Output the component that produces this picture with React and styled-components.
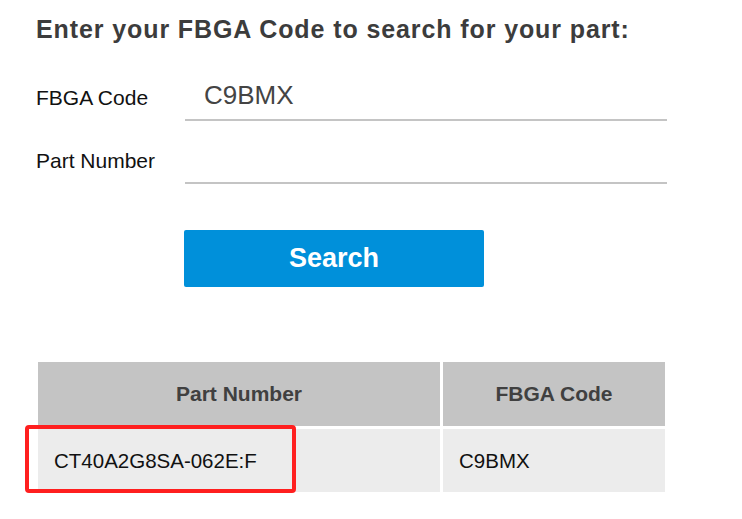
import React, { useState } from "react";
import styled, { createGlobalStyle } from "styled-components";

const results = [{ part: "CT40A2G8SA-062E:F", fbga: "C9BMX" }];

export default function App() {
  const [fbga, setFbga] = useState("C9BMX");
  const [part, setPart] = useState("");

  return (
    <Page>
      <Global />
      <Title>Enter your FBGA Code to search for your part:</Title>
      <Form onSubmit={(e) => e.preventDefault()}>
        <Field>
          <Label>FBGA Code</Label>
          <Input value={fbga} onChange={(e) => setFbga(e.target.value)} />
        </Field>
        <Field>
          <Label>Part Number</Label>
          <Input value={part} onChange={(e) => setPart(e.target.value)} />
        </Field>
        <SearchButton>Search</SearchButton>
      </Form>

      <Results>
        <HeadCell>Part Number</HeadCell>
        <HeadCell>FBGA Code</HeadCell>
        {results.map((r) => (
          <React.Fragment key={r.part}>
            <Cell>{r.part}</Cell>
            <Cell>{r.fbga}</Cell>
          </React.Fragment>
        ))}
        <Highlight />
      </Results>
    </Page>
  );
}

const Global = createGlobalStyle`
  html, body { margin:0; padding:0; background:#fff; }
  body { font-family:"Liberation Sans", Arial, sans-serif; }
`;

const Page = styled.div`
  width:742px;
  height:519px;
  padding:0 0 0 36px;
  box-sizing:border-box;
  overflow:hidden;
`;

const Title = styled.h1`
  margin:0;
  padding-top:14px;
  font-size:25px;
  line-height:30px;
  font-weight:bold;
  color:#3c3c3c;
  letter-spacing:0.9px;
`;

const Form = styled.form`
  display:flex;
  flex-direction:column;
  margin-top:21px;
`;

const Field = styled.div`
  display:flex;
  align-items:flex-end;
  height:63px;
  &:first-child { height:56px; }
`;

const Label = styled.label`
  width:149px;
  font-size:21px;
  line-height:24px;
  color:#111;
  padding-bottom:11px;
`;

const Input = styled.input`
  width:482px;
  height:42px;
  box-sizing:border-box;
  border:none;
  border-bottom:2px solid #c4c4c4;
  padding:0 0 8px 19px;
  font-family:"Liberation Sans", Arial, sans-serif;
  font-size:26px;
  color:#444;
  outline:none;
  background:transparent;
`;

const SearchButton = styled.button`
  margin:46px 0 0 148px;
  width:300px;
  height:57px;
  border:none;
  border-radius:2px;
  background:#0090da;
  color:#fff;
  font-family:"Liberation Sans", Arial, sans-serif;
  font-size:27px;
  font-weight:bold;
  cursor:pointer;
`;

const Results = styled.div`
  position:relative;
  display:grid;
  grid-template-columns:402px 222px;
  grid-template-rows:64px 63px;
  gap:3px;
  margin:75px 0 0 2px;
  width:627px;
`;

const HeadCell = styled.div`
  display:flex;
  align-items:center;
  justify-content:center;
  background:#c4c4c4;
  color:#404040;
  font-size:21px;
  font-weight:bold;
`;

const Cell = styled.div`
  display:flex;
  align-items:center;
  padding-left:16px;
  background:#ececec;
  color:#111;
  font-size:20.5px;
`;

const Highlight = styled.div`
  position:absolute;
  left:-13px;
  top:63px;
  width:271px;
  height:68px;
  box-sizing:border-box;
  border:4px solid #ff1f1f;
  border-radius:4px;
  pointer-events:none;
`;
